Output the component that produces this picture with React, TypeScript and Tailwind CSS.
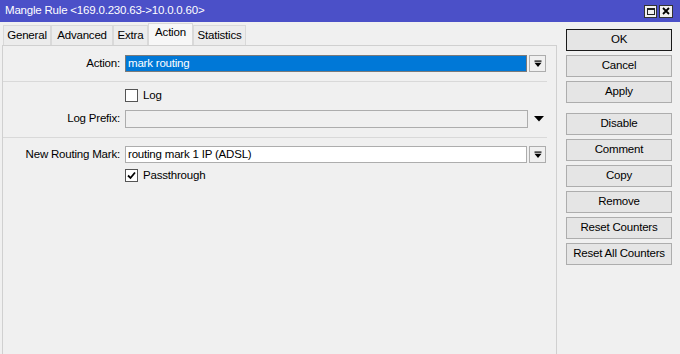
import React from "react";

function DropBtn() {
  return (
    <div className="ml-[2px] w-[17px] h-full border border-[#adadad] bg-[#f0f0f0] flex items-center justify-center">
      <svg width="8" height="8" viewBox="0 0 8 8">
        <rect x="0.5" y="0.5" width="7" height="1.2" fill="#000" />
        <polygon points="0.5,2.8 7.5,2.8 4,7" fill="#000" />
      </svg>
    </div>
  );
}

function Btn({ label, def, cls }: { label: string; def?: boolean; cls?: string }) {
  return (
    <div
      className={
        "w-[106px] h-[22px] flex items-center justify-center bg-[#e5e5e5] border text-[11.5px] tracking-[-0.2px] text-black " +
        (def ? "border-[#1a1a1a] " : "border-[#adadad] ") +
        (cls || "")
      }
    >
      {label}
    </div>
  );
}

function CheckBox({ checked }: { checked?: boolean }) {
  return (
    <div className="w-[13px] h-[13px] border border-[#555] bg-white flex items-center justify-center">
      {checked && (
        <svg width="9" height="9" viewBox="0 0 9 9">
          <polyline points="1,4.5 3.5,7 8,1.5" fill="none" stroke="#000" strokeWidth="1.8" />
        </svg>
      )}
    </div>
  );
}

export default function App() {
  const tabs: { name: string; w: string; sel?: boolean }[] = [
    { name: "General", w: "w-[48px]" },
    { name: "Advanced", w: "w-[62px]" },
    { name: "Extra", w: "w-[35px]" },
    { name: "Action", w: "w-[45px]", sel: true },
    { name: "Statistics", w: "w-[53px]" },
  ];
  return (
    <div className="w-[680px] h-[354px] bg-[#f0f0f0] overflow-hidden flex flex-col [font-family:'Liberation_Sans',Arial,sans-serif] text-black">
      <div className="h-[22px] bg-[#4b50c8] flex items-center pl-[5px] text-white text-[11.5px] tracking-[-0.2px] shrink-0">
        <span className="flex-1">Mangle Rule &lt;169.0.230.63-&gt;10.0.0.60&gt;</span>
        <div className="flex items-center gap-[2px] mr-[7px]">
          <div className="w-[13px] h-[13px] bg-[#f0f0f0] border border-[#333] flex items-center justify-center">
            <div className="w-[8px] h-[7px] border border-[#222] border-t-2" />
          </div>
          <div className="w-[14px] h-[13px] bg-[#f0f0f0] border border-[#333] flex items-center justify-center">
            <svg width="8" height="8" viewBox="0 0 8 8">
              <path d="M1 1 L7 7 M7 1 L1 7" stroke="#000" strokeWidth="1.8" />
            </svg>
          </div>
        </div>
      </div>
      <div className="flex flex-1">
        <div className="w-[557px] flex flex-col">
          <div className="h-[23px] flex items-end pl-[3px]">
            {tabs.map((t) => (
              <div
                key={t.name}
                className={
                  t.w +
                  " flex items-center justify-center text-[11.5px] tracking-[-0.2px] border border-b-0 border-[#d9d9d9] " +
                  (t.sel ? "h-[22px] bg-[#f7f7f7] pb-[3px]" : "h-[20px] bg-[#ececec]")
                }
              >
                {t.name}
              </div>
            ))}
          </div>
          <div className="flex-1 ml-[2px] border-t border-l border-r border-[#d0d0d0] pt-[9px] flex flex-col text-[11.5px] tracking-[-0.2px]">
            <div className="flex h-[17px] items-center">
              <div className="w-[117px] text-right">Action:</div>
              <div className="ml-[5px] w-[402px] h-full bg-[#0078d7] border border-[#7a7a7a] text-white pl-[2px] flex items-center">
                mark routing
              </div>
              <DropBtn />
            </div>
            <div className="mt-[9px] w-[544px] border-b border-[#d9d9d9]" />
            <div className="mt-[7px] flex h-[13px] items-center">
              <div className="ml-[122px]">
                <CheckBox />
              </div>
              <span className="ml-[5px]">Log</span>
            </div>
            <div className="mt-[8px] flex h-[18px] items-center">
              <div className="w-[117px] text-right">Log Prefix:</div>
              <div className="ml-[5px] w-[403px] h-full bg-[#f0f0f0] border border-[#adadad]" />
              <div className="ml-[6px] w-[10px] flex justify-center">
                <svg width="10" height="6" viewBox="0 0 10 6">
                  <polygon points="0,0 10,0 5,5.5" fill="#000" />
                </svg>
              </div>
            </div>
            <div className="mt-[9px] w-[544px] border-b border-[#d9d9d9]" />
            <div className="mt-[8px] flex h-[17px] items-center">
              <div className="w-[117px] text-right">New Routing Mark:</div>
              <div className="ml-[5px] w-[402px] h-full bg-white border border-[#adadad] pl-[2px] flex items-center">
                routing mark 1 IP (ADSL)
              </div>
              <DropBtn />
            </div>
            <div className="mt-[6px] flex h-[13px] items-center">
              <div className="ml-[122px]">
                <CheckBox checked />
              </div>
              <span className="ml-[5px]">Passthrough</span>
            </div>
          </div>
        </div>
        <div className="pl-[9px] pt-[7px] flex flex-col">
          <Btn label="OK" def />
          <Btn label="Cancel" cls="mt-[4px]" />
          <Btn label="Apply" cls="mt-[4px]" />
          <Btn label="Disable" cls="mt-[10px]" />
          <Btn label="Comment" cls="mt-[4px]" />
          <Btn label="Copy" cls="mt-[4px]" />
          <Btn label="Remove" cls="mt-[4px]" />
          <Btn label="Reset Counters" cls="mt-[4px]" />
          <Btn label="Reset All Counters" cls="mt-[4px]" />
        </div>
      </div>
    </div>
  );
}
